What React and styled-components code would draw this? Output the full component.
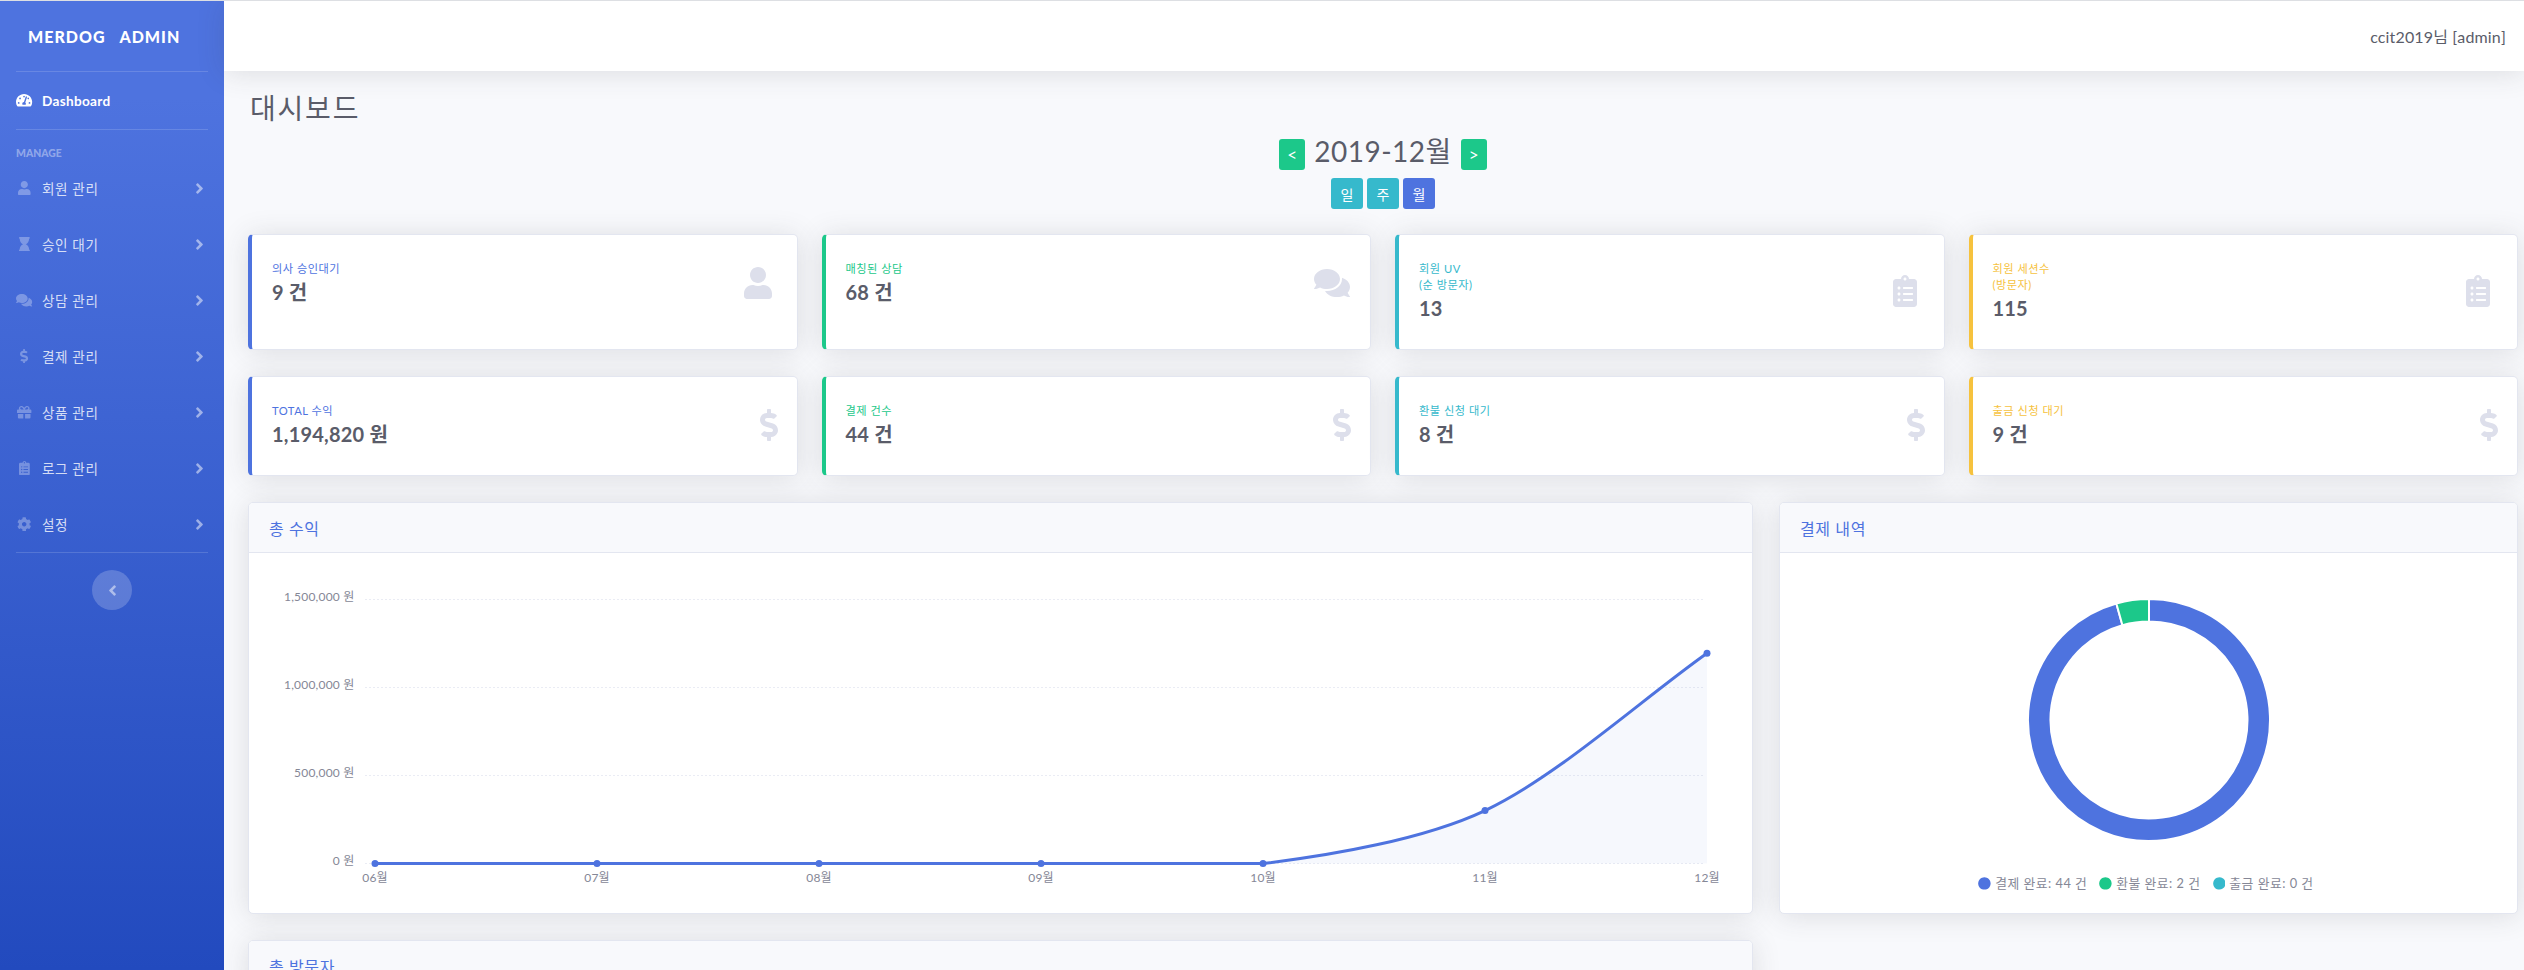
import React from "react";
import styled, { createGlobalStyle } from "styled-components";
import {
  FaTachometerAlt,
  FaUser,
  FaHourglass,
  FaComments,
  FaDollarSign,
  FaGift,
  FaClipboardList,
  FaCog,
  FaAngleRight,
  FaAngleLeft,
  FaCircle,
} from "react-icons/fa";

const FONT = `Lato, "Noto Sans CJK KR", sans-serif`;
const PRIMARY = "#4e73df";
const SUCCESS = "#1cc88a";
const INFO = "#36b9cc";
const WARNING = "#f6c23e";

const GlobalStyle = createGlobalStyle`
  html, body {
    margin: 0;
    height: 100%;
    overflow: hidden;
    background: #f8f9fc;
    font-family: ${FONT};
    color: #5a5c69;
  }
  * { box-sizing: border-box; }
`;

const Wrapper = styled.div`
  display: flex;
  height: 100vh;
  overflow: hidden;
  border-top: 1px solid #dddfe3;
`;

const Sidebar = styled.aside`
  flex: 0 0 224px;
  display: flex;
  flex-direction: column;
  padding: 0 16px;
  background: linear-gradient(180deg, #4e73df 10%, #224abe 100%);
`;

const Brand = styled.div`
  height: 70px;
  padding-left: 12px;
  display: flex;
  align-items: center;
  color: #fff;
  font-size: 16px;
  font-weight: 900;
  letter-spacing: 1px;
  white-space: pre;
`;

const SideDivider = styled.hr`
  width: 100%;
  margin: 0;
  border: 0;
  border-top: 1px solid rgba(255, 255, 255, 0.15);
`;

const NavItem = styled.div`
  height: ${(p) => (p.$active ? "57px" : "56px")};
  display: flex;
  align-items: center;
  font-size: 13.6px;
  letter-spacing: ${(p) => (p.$active ? "0.3px" : "0.6px")};
  font-weight: ${(p) => (p.$active ? 700 : 400)};
  color: ${(p) => (p.$active ? "#fff" : "rgba(255, 255, 255, 0.8)")};
`;

/* font-awesome glyphs are not square: $ratio is their width over height */
const NavIcon = styled.span`
  flex: 0 0 26px;
  width: 26px;
  display: flex;
  justify-content: center;
  padding-right: 9px;
  color: ${(p) => (p.$active ? "#fff" : "rgba(255, 255, 255, 0.3)")};

  svg {
    width: ${(p) => p.$ratio * 14.4}px;
    height: 14.4px;
  }
`;

const NavArrow = styled(FaAngleRight)`
  width: 9px;
  height: 17px;
  margin-left: auto;
  margin-right: 4px;
  color: rgba(255, 255, 255, 0.5);
`;

const SideHeading = styled.div`
  margin-top: 16px;
  height: 14px;
  line-height: 14px;
  font-size: 10.4px;
  font-weight: 900;
  color: rgba(255, 255, 255, 0.4);
`;

const Toggle = styled.div`
  align-self: center;
  width: 40px;
  height: 40px;
  margin-top: 17px;
  border-radius: 50%;
  display: flex;
  align-items: center;
  justify-content: center;
  background: rgba(255, 255, 255, 0.2);
  color: rgba(255, 255, 255, 0.5);

  svg {
    width: 9px;
    height: 17px;
  }
`;

const Main = styled.main`
  flex: 1;
  min-width: 0;
  display: flex;
  flex-direction: column;
`;

const Topbar = styled.header`
  flex: 0 0 70px;
  display: flex;
  align-items: center;
  justify-content: flex-end;
  padding-right: 18px;
  background: #fff;
  font-size: 16px;
  letter-spacing: 0.15px;
  box-shadow: 0 2px 28px 0 rgba(58, 59, 69, 0.15);
  position: relative;
  z-index: 1;
`;

const Content = styled.div`
  padding: 20px 6px 0 24px;
`;

const Title = styled.h1`
  margin: 0 0 9px 2px;
  font-size: 28px;
  line-height: 34px;
  font-weight: 400;
  letter-spacing: 1.8px;
`;

const DateRow = styled.div`
  display: flex;
  justify-content: center;
  gap: 9px;
  height: 36px;
`;

const DateText = styled.div`
  font-size: 28px;
  line-height: 34px;
  letter-spacing: 0.5px;
`;

const Button = styled.div`
  width: 32px;
  height: 31px;
  border-radius: 3px;
  display: flex;
  align-items: center;
  justify-content: center;
  color: #fff;
  font-size: 14px;
  background: ${(p) => p.$bg};
`;

const StepButton = styled(Button)`
  width: 26px;
  margin-top: 5px;
  font-size: 17px;
`;

const RangeRow = styled.div`
  display: flex;
  justify-content: center;
  gap: 4px;
  margin: 8px 0 25px;
`;

const StatRow = styled.div`
  display: grid;
  grid-template-columns: repeat(4, 1fr);
  gap: 24px;
  margin-bottom: 26px;
`;

const StatCard = styled.div`
  display: flex;
  align-items: flex-start;
  padding: 26px 19px 29px 20px;
  background: #fff;
  border: 1px solid #e3e6f0;
  border-left: 4px solid ${(p) => p.$color};
  border-radius: 5px;
  box-shadow: 0 2px 28px 0 rgba(58, 59, 69, 0.15);
`;

const StatInner = styled.div`
  flex: 1;
  display: flex;
  align-items: center;
  justify-content: space-between;
`;

const StatLabel = styled.div`
  font-size: 11.2px;
  line-height: 16px;
  letter-spacing: 0.5px;
  color: ${(p) => p.$color};
`;

const StatValue = styled.div`
  margin-top: 3px;
  font-size: 20px;
  line-height: 24px;
  font-weight: 700;
  letter-spacing: 0.2px;
`;

const StatIcon = styled.span`
  display: flex;
  margin-right: ${(p) => p.$inset}px;
  color: #dddfeb;

  svg {
    width: ${(p) => p.$ratio * 32}px;
    height: 32px;
  }
`;

const ChartGrid = styled.div`
  display: grid;
  grid-template-columns: 1505fr 739fr;
  gap: 26px;
  align-items: start;
`;

const ChartColumn = styled.div`
  display: flex;
  flex-direction: column;
  gap: 26px;
`;

const Panel = styled.section`
  background: #fff;
  border: 1px solid #e3e6f0;
  border-radius: 5px;
  box-shadow: 0 2px 28px 0 rgba(58, 59, 69, 0.15);
  overflow: hidden;
`;

const PanelHead = styled.div`
  height: 50px;
  padding-left: 20px;
  display: flex;
  align-items: center;
  background: #f8f9fc;
  border-bottom: 1px solid #e3e6f0;
  color: ${PRIMARY};
  font-size: 16px;
  letter-spacing: 0.6px;
`;

const PanelBody = styled.div`
  height: ${(p) => p.$height}px;
`;

const ChartSvg = styled.svg`
  display: block;
  width: 100%;
  height: 100%;
  font-family: ${FONT};
  font-size: 12px;
  letter-spacing: 0.2px;
  fill: #858796;
`;

const DonutBody = styled(PanelBody)`
  display: flex;
  flex-direction: column;
  align-items: center;
  padding-top: 45px;
`;

const Legend = styled.div`
  display: flex;
  margin-top: 32px;
  padding-right: 5px;
  gap: 12px;
  font-size: 12.8px;
  line-height: 19px;
  letter-spacing: 0.5px;
  color: #858796;
`;

const LegendItem = styled.span`
  display: flex;
  align-items: center;
  gap: 4px;
`;

const LegendDot = styled(FaCircle)`
  font-size: 12.8px;
  color: ${(p) => p.$color};
`;

const NAV = [
  ["회원 관리", FaUser, 0.875],
  ["승인 대기", FaHourglass, 0.75],
  ["상담 관리", FaComments, 1.125],
  ["결제 관리", FaDollarSign, 0.5625],
  ["상품 관리", FaGift, 1],
  ["로그 관리", FaClipboardList, 0.75],
  ["설정", FaCog, 1],
];

const ROW_ONE = [
  { label: ["의사 승인대기"], value: "9 건", color: PRIMARY, Icon: FaUser, ratio: 0.875, inset: 6 },
  { label: ["매칭된 상담"], value: "68 건", color: SUCCESS, Icon: FaComments, ratio: 1.125, inset: 1 },
  { label: ["회원 UV", "(순 방문자)"], value: "13", color: INFO, Icon: FaClipboardList, ratio: 0.75, inset: 8 },
  { label: ["회원 세션수", "(방문자)"], value: "115", color: WARNING, Icon: FaClipboardList, ratio: 0.75, inset: 8 },
];

const ROW_TWO = [
  { label: ["TOTAL 수익"], value: "1,194,820 원", color: PRIMARY, Icon: FaDollarSign, ratio: 0.5625, inset: 0 },
  { label: ["결제 건수"], value: "44 건", color: SUCCESS, Icon: FaDollarSign, ratio: 0.5625, inset: 0 },
  { label: ["환불 신청 대기"], value: "8 건", color: INFO, Icon: FaDollarSign, ratio: 0.5625, inset: 0 },
  { label: ["출금 신청 대기"], value: "9 건", color: WARNING, Icon: FaDollarSign, ratio: 0.5625, inset: 0 },
];

// chart.js style spline, tension 0.3, control points capped at the axis
const Y_ZERO = 310.5;
const toY = (v) => Y_ZERO - (v / 1500000) * 264;
const POINTS = [0, 0, 0, 0, 0, 301000, 1194820].map((v, i) => ({ x: 126 + 222 * i, y: toY(v), v }));
const MONTHS = ["06월", "07월", "08월", "09월", "10월", "11월", "12월"];
const TICKS = [
  ["1,500,000 원", 46.5],
  ["1,000,000 원", 134.5],
  ["500,000 원", 222.5],
  ["0 원", 310.5],
];

const splinePath = (pts, t = 0.3) => {
  const ctrl = pts.map((p, i) => {
    const prev = pts[i - 1] || p;
    const next = pts[i + 1] || p;
    const d01 = Math.hypot(p.x - prev.x, p.y - prev.y);
    const d12 = Math.hypot(next.x - p.x, next.y - p.y);
    const sum = d01 + d12 || 1;
    const fa = (t * d01) / sum;
    const fb = (t * d12) / sum;
    return {
      px: p.x - fa * (next.x - prev.x),
      py: Math.min(Y_ZERO, p.y - fa * (next.y - prev.y)),
      nx: p.x + fb * (next.x - prev.x),
      ny: Math.min(Y_ZERO, p.y + fb * (next.y - prev.y)),
    };
  });
  let d = `M${pts[0].x} ${pts[0].y}`;
  for (let i = 1; i < pts.length; i++) {
    d += ` C${ctrl[i - 1].nx} ${ctrl[i - 1].ny} ${ctrl[i].px} ${ctrl[i].py} ${pts[i].x} ${pts[i].y}`;
  }
  return d;
};

const arc = (cx, cy, r, ri, a0, a1) => {
  const pt = (rad, a) => {
    const ang = ((a - 90) * Math.PI) / 180;
    return `${cx + rad * Math.cos(ang)} ${cy + rad * Math.sin(ang)}`;
  };
  const large = a1 - a0 > 180 ? 1 : 0;
  return `M${pt(r, a0)} A${r} ${r} 0 ${large} 1 ${pt(r, a1)} L${pt(ri, a1)} A${ri} ${ri} 0 ${large} 0 ${pt(ri, a0)} Z`;
};

const StatCards = ({ items }) => (
  <StatRow>
    {items.map((c) => (
      <StatCard key={c.label[0]} $color={c.color}>
        <StatInner>
          <div>
            <StatLabel $color={c.color}>
              {c.label.map((line) => (
                <div key={line}>{line}</div>
              ))}
            </StatLabel>
            <StatValue>{c.value}</StatValue>
          </div>
          <StatIcon $inset={c.inset} $ratio={c.ratio}>
            <c.Icon />
          </StatIcon>
        </StatInner>
      </StatCard>
    ))}
  </StatRow>
);

const RevenueChart = () => {
  const line = splinePath(POINTS);
  return (
    <ChartSvg viewBox="0 0 1503 360">
      {TICKS.map(([label, y]) => (
        <g key={label}>
          <line x1="116" x2="1456" y1={y} y2={y} stroke="#eaecf4" strokeDasharray="2" />
          <text x="105.5" y={y - 2} textAnchor="end" dominantBaseline="middle">
            {label}
          </text>
        </g>
      ))}
      <path d={`${line} L1458 ${Y_ZERO} L126 ${Y_ZERO} Z`} fill="rgba(78,115,223,0.05)" />
      <path d={line} fill="none" stroke={PRIMARY} strokeWidth="3" />
      {POINTS.map((p) => (
        <circle key={p.x} cx={p.x} cy={p.y} r="3.5" fill={PRIMARY} />
      ))}
      {MONTHS.map((m, i) => (
        <text key={m} x={126 + 222 * i} y="326" textAnchor="middle" dominantBaseline="middle">
          {m}
        </text>
      ))}
    </ChartSvg>
  );
};

const Donut = () => (
  <svg width="244" height="244" viewBox="0 0 244 244">
    <path d={arc(122, 122, 121, 98.5, 0, 344.35)} fill={PRIMARY} stroke="#fff" strokeWidth="2" />
    <path d={arc(122, 122, 121, 98.5, 344.35, 360)} fill={SUCCESS} stroke="#fff" strokeWidth="2" />
  </svg>
);

const App = () => (
  <>
    <GlobalStyle />
    <Wrapper>
      <Sidebar>
        <Brand>{"MERDOG   ADMIN"}</Brand>
        <SideDivider />
        <NavItem $active>
          <NavIcon $active $ratio={1.125}>
            <FaTachometerAlt />
          </NavIcon>
          Dashboard
        </NavItem>
        <SideDivider />
        <SideHeading>MANAGE</SideHeading>
        {NAV.map(([label, Icon, ratio]) => (
          <NavItem key={label}>
            <NavIcon $ratio={ratio}>
              <Icon />
            </NavIcon>
            {label}
            <NavArrow />
          </NavItem>
        ))}
        <SideDivider />
        <Toggle>
          <FaAngleLeft />
        </Toggle>
      </Sidebar>
      <Main>
        <Topbar>ccit2019님 [admin]</Topbar>
        <Content>
          <Title>대시보드</Title>
          <DateRow>
            <StepButton $bg={SUCCESS}>&lt;</StepButton>
            <DateText>2019-12월</DateText>
            <StepButton $bg={SUCCESS}>&gt;</StepButton>
          </DateRow>
          <RangeRow>
            <Button $bg={INFO}>일</Button>
            <Button $bg={INFO}>주</Button>
            <Button $bg={PRIMARY}>월</Button>
          </RangeRow>
          <StatCards items={ROW_ONE} />
          <StatCards items={ROW_TWO} />
          <ChartGrid>
            <ChartColumn>
              <Panel>
                <PanelHead>총 수익</PanelHead>
                <PanelBody $height={360}>
                  <RevenueChart />
                </PanelBody>
              </Panel>
              <Panel>
                <PanelHead>총 방문자</PanelHead>
                <PanelBody $height={360} />
              </Panel>
            </ChartColumn>
            <Panel>
              <PanelHead>결제 내역</PanelHead>
              <DonutBody $height={360}>
                <Donut />
                <Legend>
                  <LegendItem>
                    <LegendDot $color={PRIMARY} />
                    결제 완료: 44 건
                  </LegendItem>
                  <LegendItem>
                    <LegendDot $color={SUCCESS} />
                    환불 완료: 2 건
                  </LegendItem>
                  <LegendItem>
                    <LegendDot $color={INFO} />
                    출금 완료: 0 건
                  </LegendItem>
                </Legend>
              </DonutBody>
            </Panel>
          </ChartGrid>
        </Content>
      </Main>
    </Wrapper>
  </>
);

export default App;
